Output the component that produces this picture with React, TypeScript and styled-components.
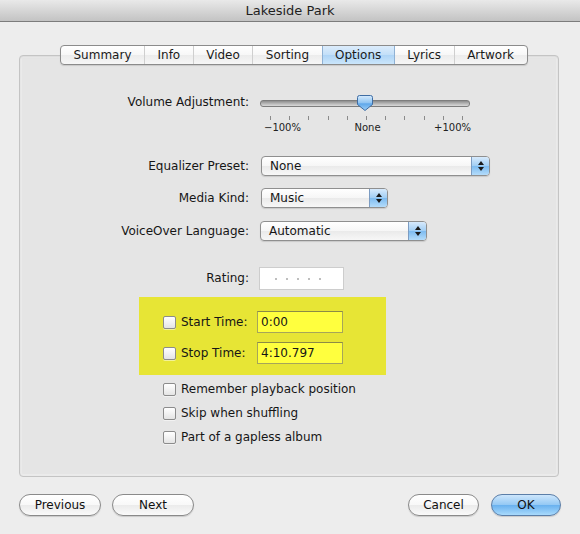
import React from "react";
import styled, { createGlobalStyle, css } from "styled-components";

const GlobalStyle = createGlobalStyle`
  html, body { margin: 0; padding: 0; }
  body {
    width: 580px; height: 534px; overflow: hidden;
    background: #ededed;
    font-family: "DejaVu Sans", "Liberation Sans", sans-serif;
    font-size: 12px;
    color: #161616;
  }
  * { box-sizing: border-box; }
`;

const Window = styled.div`
  width: 580px;
  height: 534px;
  display: flex;
  flex-direction: column;
  background: #ededed;
`;

const TitleBar = styled.div`
  flex: none;
  height: 22px;
  display: flex;
  align-items: center;
  justify-content: center;
  background: linear-gradient(#e9e9e9, #d6d6d6 50%, #c3c3c3);
  border-bottom: 1px solid #7c7c7c;
  font-size: 13px;
  color: #1e1e1e;
`;

const Body = styled.div`
  flex: 1;
  display: flex;
  flex-direction: column;
  padding: 0 19px;
`;

const TabBar = styled.div`
  position: relative;
  z-index: 1;
  align-self: flex-start;
  margin: 23px 0 0 41px;
  height: 20px;
  display: flex;
  border: 1px solid #8b8b8b;
  border-radius: 4px;
  overflow: hidden;
  background: linear-gradient(#ffffff, #f7f7f7 50%, #ececec 51%, #f6f6f6);
  box-shadow: 0 1px 1px rgba(0, 0, 0, 0.12);
`;

const Tab = styled.div<{ $active?: boolean; $first?: boolean }>`
  display: flex;
  align-items: center;
  padding: 0 12.5px;
  line-height: 18px;
  color: #1a1a1a;
  border-left: ${(p) => (p.$first ? "none" : "1px solid #cfcfcf")};
  ${(p) =>
    p.$active &&
    css`
      background: linear-gradient(#dcecfc, #c2dff8 50%, #aed4f6 51%, #cbe6fb);
      border-left-color: #8fb1d4;
      & + div { border-left-color: #8fb1d4; }
    `}
`;

const Panel = styled.div`
  margin-top: -10px;
  margin-right: 2px;
  height: 422px;
  flex: none;
  display: flex;
  flex-direction: column;
  background: #e5e5e5;
  border: 1px solid #c4c4c4;
  border-radius: 4px;
  box-shadow: inset 0 1px 2px rgba(0, 0, 0, 0.08), inset 0 0 0 2px #ebebeb;
`;

const Row = styled.div<{ $top: number }>`
  display: flex;
  align-items: flex-start;
  margin-top: ${(p) => p.$top}px;
`;

const Label = styled.span`
  width: 229px;
  flex: none;
  text-align: right;
  line-height: 20px;
  white-space: nowrap;
`;

const Control = styled.div<{ $gap: number }>`
  margin-left: ${(p) => p.$gap}px;
`;

/* slider */
const Slider = styled.div`
  width: 212px;
  display: flex;
  flex-direction: column;
`;

const Track = styled.div`
  position: relative;
  height: 20px;
  &::before {
    content: "";
    position: absolute;
    left: 1px;
    right: 1px;
    top: 8px;
    height: 5px;
    border-radius: 3px;
    border: 1px solid #7d7d7d;
    background: linear-gradient(#8d8d8d, #bdbdbd 60%, #d9d9d9);
  }
`;

const Thumb = styled.svg`
  position: absolute;
  left: 98px;
  top: 3px;
`;

const Ticks = styled.div`
  display: flex;
  justify-content: space-between;
  padding: 0 8px 0 11px;
  margin-top: 4px;
  height: 4px;
`;

const Tick = styled.span`
  width: 1px;
  height: 4px;
  background: #8a8a8a;
`;

const TickLabels = styled.div`
  display: flex;
  justify-content: space-between;
  padding-left: 5px;
  margin-top: 2px;
  font-size: 10px;
  line-height: 12px;
  color: #222;
`;

/* popup */
const Popup = styled.div<{ $w: number }>`
  width: ${(p) => p.$w}px;
  height: 20px;
  display: flex;
  border: 1px solid #8f8f8f;
  border-radius: 4px;
  overflow: hidden;
  background: linear-gradient(#ffffff, #f6f6f6 50%, #eaeaea 51%, #f7f7f7);
  box-shadow: 0 1px 1px rgba(0, 0, 0, 0.12);
`;

const PopupText = styled.span`
  flex: 1;
  padding-left: 8px;
  line-height: 18px;
`;

const PopupArrows = styled.span`
  width: 18px;
  flex: none;
  display: flex;
  flex-direction: column;
  align-items: center;
  justify-content: center;
  gap: 2px;
  border-left: 1px solid #7c9cc2;
  background: linear-gradient(#d7eafc, #9fcdf4 50%, #7dbbf0 51%, #b4dcfa);
`;

/* rating */
const RatingBox = styled.div`
  width: 85px;
  height: 23px;
  margin-top: -1px;
  display: flex;
  align-items: center;
  gap: 9px;
  padding-left: 15px;
  background: #ffffff;
  border: 1px solid #cdcdcd;
`;

const Dot = styled.span`
  width: 2px;
  height: 2px;
  border-radius: 1px;
  background: #a9a9a9;
`;

/* highlight */
const Highlight = styled.div`
  margin: 7px 0 0 119px;
  width: 247px;
  padding: 14px 0 11px;
  display: flex;
  flex-direction: column;
  gap: 9px;
  background: #e7e535;
`;

const TimeRow = styled.div`
  display: flex;
  align-items: center;
`;

const TimeLabel = styled.label`
  width: 118px;
  flex: none;
  display: flex;
  align-items: center;
  gap: 5px;
  padding-left: 24px;
  white-space: nowrap;
`;

const TimeField = styled.div`
  width: 86px;
  height: 22px;
  padding-left: 3px;
  line-height: 20px;
  background: #ffff3e;
  border: 1px solid #a6a55a;
  border-top-color: #8c8b45;
`;

const Box = styled.span`
  width: 13px;
  height: 13px;
  flex: none;
  border: 1px solid #8c8c8c;
  border-radius: 2px;
  background: linear-gradient(#ffffff, #f2f2f2 50%, #e4e4e4);
  box-shadow: 0 1px 0 rgba(255, 255, 255, 0.5);
`;

const CheckRow = styled.label<{ $top: number }>`
  display: flex;
  align-items: center;
  gap: 5px;
  margin: ${(p) => p.$top}px 0 0 143px;
  height: 16px;
  white-space: nowrap;
`;

/* footer */
const Footer = styled.div`
  margin-top: 17px;
  display: flex;
  align-items: center;
`;

const Button = styled.button<{ $w: number; $primary?: boolean; $gap?: number }>`
  width: ${(p) => p.$w}px;
  height: 22px;
  margin-left: ${(p) => p.$gap ?? 0}px;
  padding: 0;
  font-family: inherit;
  font-size: 12px;
  color: #111;
  border-radius: 11px;
  border: 1px solid #8a8a8a;
  background: linear-gradient(#ffffff, #f8f8f8 50%, #ebebeb 51%, #fafafa);
  box-shadow: 0 1px 1px rgba(0, 0, 0, 0.15);
  ${(p) =>
    p.$primary &&
    css`
      border-color: #5b7ea8;
      background: linear-gradient(#cde6fc, #93c8f4 50%, #69b1ef 51%, #a9dafc);
    `}
`;

const Spacer = styled.div`
  flex: 1;
`;

const Arrows = () => (
  <>
    <svg width="6" height="4" viewBox="0 0 6 4">
      <path d="M3 0 L6 4 L0 4 Z" fill="#1a1a1a" />
    </svg>
    <svg width="6" height="4" viewBox="0 0 6 4">
      <path d="M0 0 L6 0 L3 4 Z" fill="#1a1a1a" />
    </svg>
  </>
);

const PopupButton = ({ w, value }: { w: number; value: string }) => (
  <Popup $w={w}>
    <PopupText>{value}</PopupText>
    <PopupArrows>
      <Arrows />
    </PopupArrows>
  </Popup>
);

const tabs = ["Summary", "Info", "Video", "Sorting", "Options", "Lyrics", "Artwork"];

export default function App() {
  return (
    <>
      <GlobalStyle />
      <Window>
        <TitleBar>Lakeside Park</TitleBar>
        <Body>
          <TabBar>
            {tabs.map((t, i) => (
              <Tab key={t} $first={i === 0} $active={t === "Options"}>
                {t}
              </Tab>
            ))}
          </TabBar>
          <Panel>
            <Row $top={36}>
              <Label>Volume Adjustment:</Label>
              <Control $gap={10}>
                <Slider>
                  <Track>
                    <Thumb width="16" height="16" viewBox="0 0 16 16">
                      <defs>
                        <linearGradient id="thumbG" x1="0" y1="0" x2="0" y2="1">
                          <stop offset="0" stopColor="#d6ebfd" />
                          <stop offset="0.5" stopColor="#8ec3f2" />
                          <stop offset="0.55" stopColor="#5ea7ea" />
                          <stop offset="1" stopColor="#9fd0f8" />
                        </linearGradient>
                      </defs>
                      <path
                        d="M2.5 0.5 H13.5 A2 2 0 0 1 15.5 2.5 V9.5 L8 15.5 L0.5 9.5 V2.5 A2 2 0 0 1 2.5 0.5 Z"
                        fill="url(#thumbG)"
                        stroke="#3f6da3"
                        strokeWidth="1"
                      />
                    </Thumb>
                  </Track>
                  <Ticks>
                    {Array.from({ length: 11 }).map((_, i) => (
                      <Tick key={i} />
                    ))}
                  </Ticks>
                  <TickLabels>
                    <span>−100%</span>
                    <span>None</span>
                    <span>+100%</span>
                  </TickLabels>
                </Slider>
              </Control>
            </Row>
            <Row $top={22}>
              <Label>Equalizer Preset:</Label>
              <Control $gap={12}>
                <PopupButton w={229} value="None" />
              </Control>
            </Row>
            <Row $top={12}>
              <Label>Media Kind:</Label>
              <Control $gap={12}>
                <PopupButton w={127} value="Music" />
              </Control>
            </Row>
            <Row $top={13}>
              <Label>VoiceOver Language:</Label>
              <Control $gap={11}>
                <PopupButton w={167} value="Automatic" />
              </Control>
            </Row>
            <Row $top={27}>
              <Label>Rating:</Label>
              <Control $gap={10}>
                <RatingBox>
                  {Array.from({ length: 5 }).map((_, i) => (
                    <Dot key={i} />
                  ))}
                </RatingBox>
              </Control>
            </Row>
            <Highlight>
              <TimeRow>
                <TimeLabel>
                  <Box />
                  Start Time:
                </TimeLabel>
                <TimeField>0:00</TimeField>
              </TimeRow>
              <TimeRow>
                <TimeLabel>
                  <Box />
                  Stop Time:
                </TimeLabel>
                <TimeField>4:10.797</TimeField>
              </TimeRow>
            </Highlight>
            <CheckRow $top={6}>
              <Box />
              Remember playback position
            </CheckRow>
            <CheckRow $top={8}>
              <Box />
              Skip when shuffling
            </CheckRow>
            <CheckRow $top={8}>
              <Box />
              Part of a gapless album
            </CheckRow>
          </Panel>
          <Footer>
            <Button $w={82}>Previous</Button>
            <Button $w={82} $gap={11}>
              Next
            </Button>
            <Spacer />
            <Button $w={71}>Cancel</Button>
            <Button $w={70} $gap={12} $primary>
              OK
            </Button>
          </Footer>
        </Body>
      </Window>
    </>
  );
}
